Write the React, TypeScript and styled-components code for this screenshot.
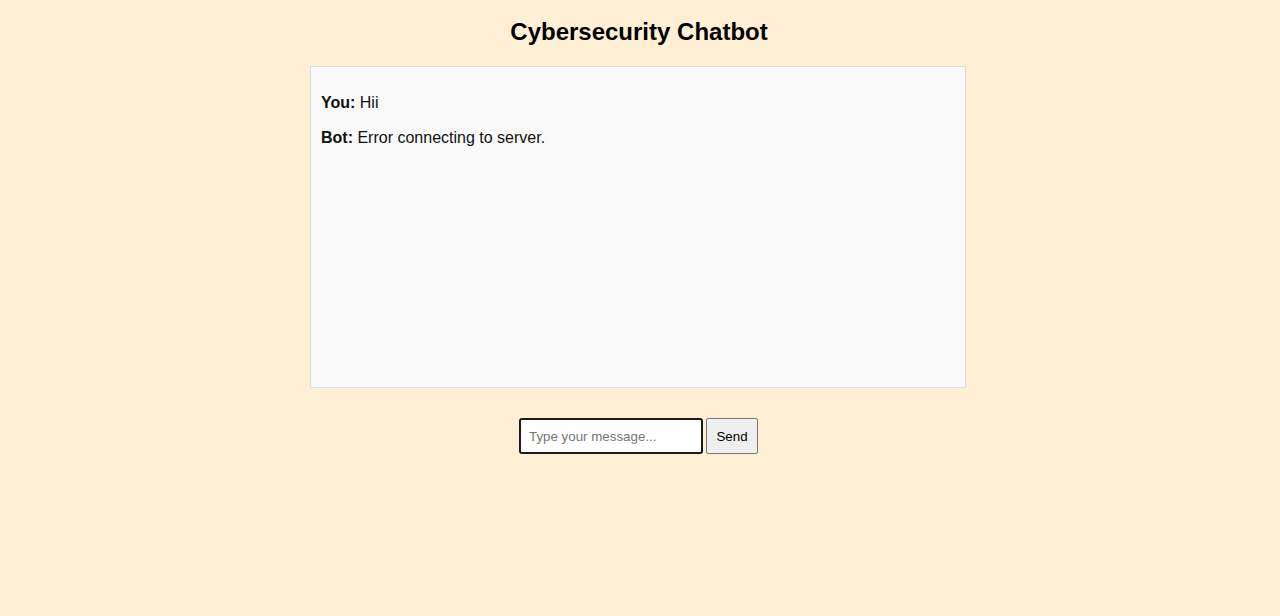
import styled, { createGlobalStyle } from "styled-components";

const GlobalStyle = createGlobalStyle`
  body {
    margin: 0;
    background-color: #ffefd5;
    font-family: "Liberation Sans", Arial, sans-serif;
  }
`;

const Page = styled.div`
  display: flex;
  flex-direction: column;
  align-items: center;
  min-height: 616px;
`;

const Title = styled.h1`
  font-size: 24px;
  font-weight: bold;
  color: #000;
  margin: 18px 0 20px -2px;
`;

const ChatBox = styled.div`
  box-sizing: border-box;
  width: 656px;
  height: 322px;
  padding: 10px;
  border: 1px solid #dddddd;
  background-color: #f9f9f9;
  overflow-y: auto;
  margin-left: -4px;
`;

const Message = styled.p`
  margin: 16px 0;
  font-size: 16px;
  line-height: 19px;
  color: #111;
`;

const InputRow = styled.form`
  display: flex;
  gap: 3px;
  margin-top: 30px;
  margin-left: -3px;
`;

const MessageInput = styled.input`
  box-sizing: border-box;
  width: 184px;
  height: 36px;
  padding: 8px;
  border: 2px solid #1a1a1a;
  border-radius: 3px;
  background: #fff;
  font-family: "Liberation Sans", Arial, sans-serif;
  font-size: 13.33px;
  outline: none;

  &::placeholder {
    color: #757575;
  }
`;

const SendButton = styled.button`
  box-sizing: border-box;
  height: 36px;
  width: 52px;
  padding: 0;
  border: 1px solid #767676;
  border-radius: 2px;
  background-color: #efefef;
  color: #000;
  font-family: "Liberation Sans", Arial, sans-serif;
  font-size: 13.33px;
`;

const messages = [
  { sender: "You", text: "Hii" },
  { sender: "Bot", text: "Error connecting to server." },
];

export default function App() {
  return (
    <>
      <GlobalStyle />
      <Page>
        <Title>Cybersecurity Chatbot</Title>
        <ChatBox>
          {messages.map((m, i) => (
            <Message key={i}>
              <strong>{m.sender}:</strong> {m.text}
            </Message>
          ))}
        </ChatBox>
        <InputRow onSubmit={(e) => e.preventDefault()}>
          <MessageInput type="text" placeholder="Type your message..." />
          <SendButton type="submit">Send</SendButton>
        </InputRow>
      </Page>
    </>
  );
}
